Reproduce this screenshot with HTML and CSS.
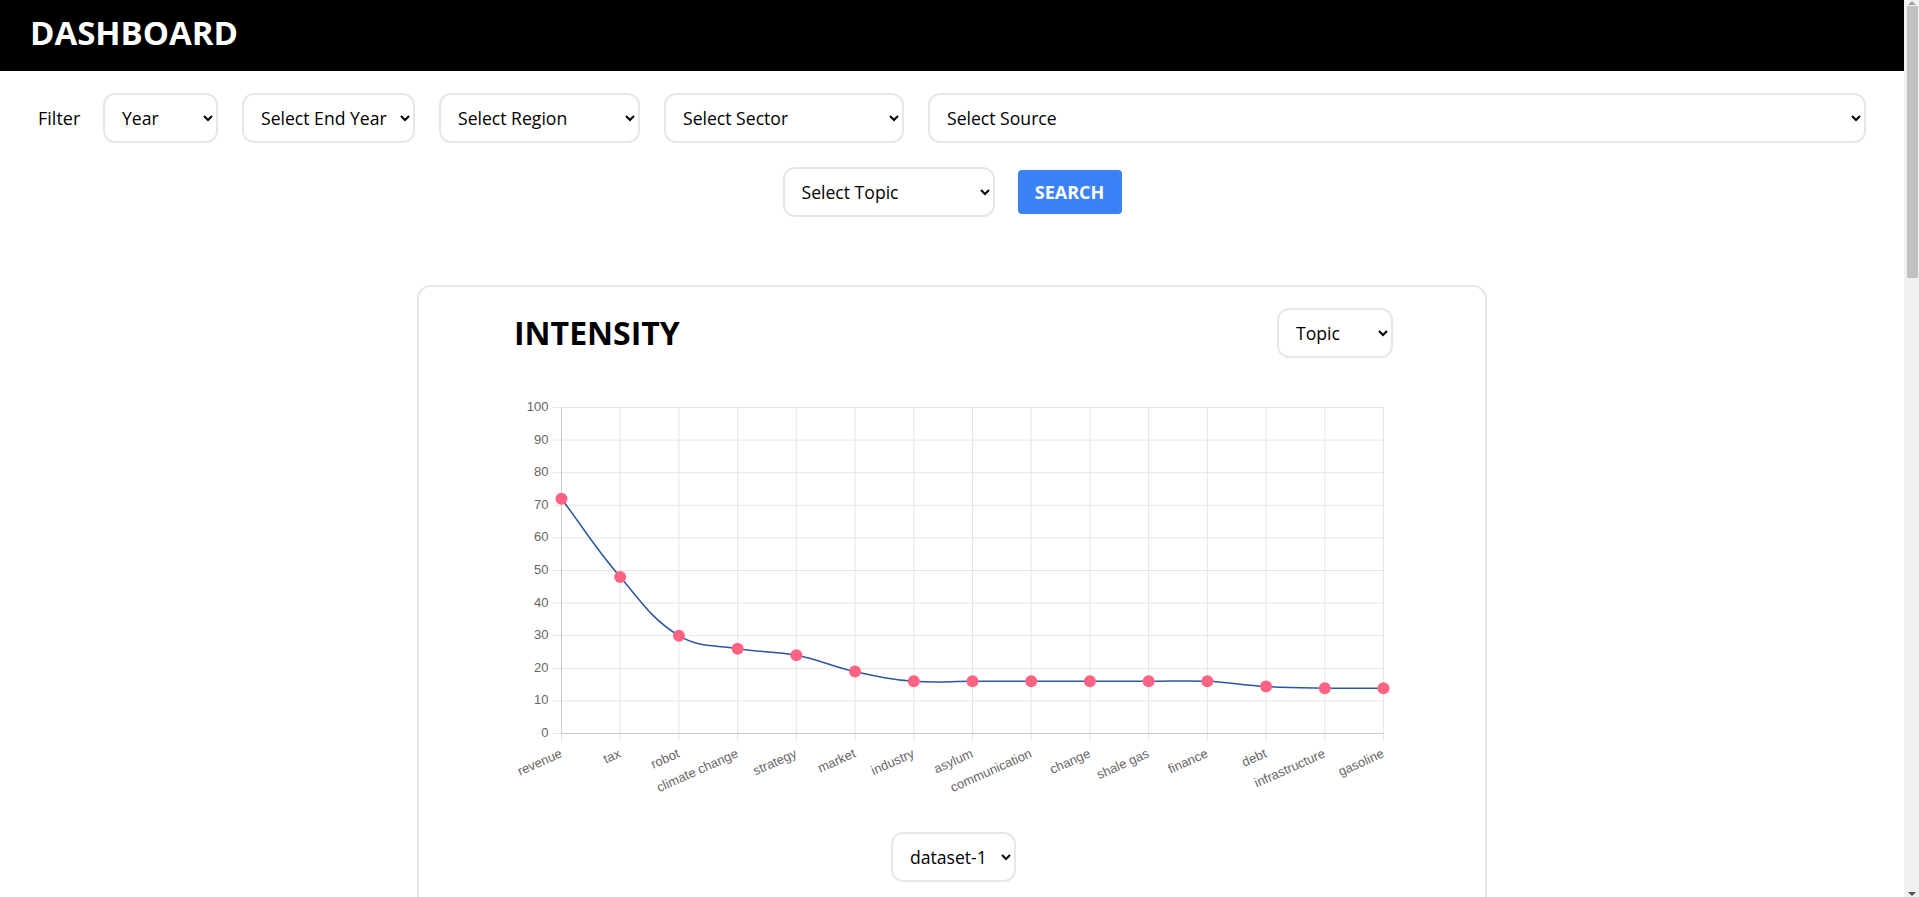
FILE: index.html
```html
<!DOCTYPE html>
<html lang="en">
<head>
<meta charset="utf-8">
<title>Dashboard</title>
<link rel="stylesheet" href="styles.css">
</head>
<body>
<header class="topbar">
  <h1 class="brand">DASHBOARD</h1>
</header>
<main class="page">
  <section class="filters">
    <div class="filter-row">
      <label class="filter-label" for="f-year">Filter</label>
      <select id="f-year" class="field field--year">
        <option>Year</option><option>2016</option><option>2017</option><option>2018</option>
      </select>
      <select class="field field--endyear">
        <option>Select End Year</option><option>2018</option><option>2020</option>
      </select>
      <select class="field field--region">
        <option>Select Region</option><option>Northern America</option><option>Europe</option>
      </select>
      <select class="field field--sector">
        <option>Select Sector</option><option>Energy</option><option>Financial services</option>
      </select>
      <select class="field field--source">
        <option>Select Source</option><option>EIA</option><option>Reuters</option>
      </select>
    </div>
    <div class="filter-row filter-row--center">
      <select class="field field--topic">
        <option>Select Topic</option><option>oil</option><option>gas</option>
      </select>
      <button class="btn-search" type="button">SEARCH</button>
    </div>
  </section>

  <section class="card">
    <div class="card-head">
      <h2 class="card-title">INTENSITY</h2>
      <select class="field field--group">
        <option>Topic</option><option>Sector</option><option>Region</option>
      </select>
    </div>
    <svg id="intensity-chart" class="chart" width="879" height="430" viewBox="0 0 879 430"></svg>
    <div class="card-foot">
      <select class="field field--dataset">
        <option>dataset-1</option><option>dataset-2</option>
      </select>
    </div>
  </section>
</main>
<div class="scrollbar" aria-hidden="true">
  <span class="scrollbar-arrow scrollbar-arrow--up"></span>
  <span class="scrollbar-thumb"></span>
  <span class="scrollbar-arrow scrollbar-arrow--down"></span>
</div>
<script src="chart.js"></script>
</body>
</html>
```

FILE: styles.css
```css
html, body {
  margin: 0;
  padding: 0;
}

body {
  font-family: "Open Sans", "Noto Sans", sans-serif;
  color: #000;
  background: #fff;
  padding-right: 15px;
}

/* classic browser scrollbar drawn over the right edge */
.scrollbar {
  position: fixed;
  top: 0;
  right: 0;
  width: 15px;
  height: 100vh;
  background: #f1f1f1;
  display: flex;
  flex-direction: column;
  align-items: center;
}

.scrollbar-arrow {
  width: 0;
  height: 0;
  border-left: 4px solid transparent;
  border-right: 4px solid transparent;
}

.scrollbar-arrow--up {
  margin-top: 1px;
  border-bottom: 4px solid #a3a3a3;
}

.scrollbar-arrow--down {
  margin-top: auto;
  margin-bottom: 1px;
  border-top: 4px solid #505050;
}

.scrollbar-thumb {
  width: 11px;
  height: 272px;
  margin-top: 1px;
  margin-left: 2px;
  background: #c1c1c1;
}

.topbar {
  background: #000;
  height: 71px;
  box-sizing: border-box;
  padding: 10px 30px 0;
}

.brand {
  margin: 0;
  font-size: 33px;
  line-height: 45px;
  font-weight: 700;
  color: #fff;
  letter-spacing: 0;
}

.page {
  padding: 22px 38px 40px;
}

.filters {
  display: flex;
  flex-direction: column;
  gap: 24px;
}

.filter-row {
  display: flex;
  align-items: center;
  gap: 24px;
}

.filter-row--center {
  justify-content: center;
  gap: 23px;
}

.filter-label {
  flex: none;
  width: 41px;
  white-space: nowrap;
  font-size: 18px;
  line-height: 24px;
}

.field {
  box-sizing: border-box;
  height: 50px;
  border: 2px solid #e5e7eb;
  border-radius: 12px;
  background: #fff;
  color: #000;
  font-family: "Open Sans", "Noto Sans", sans-serif;
  font-size: 17.6px;
  padding: 0 6px 0 13px;
  flex: none;
}

.field--year { width: 115px; }
.field--endyear { width: 173px; }
.field--region { width: 201px; }
.field--sector { width: 240px; }
.field--source { flex: 1 1 auto; min-width: 0; }
.field--topic { width: 212px; }
.field--group { width: 116px; }
.field--dataset { width: 125px; }

.btn-search {
  height: 44px;
  width: 104px;
  border: none;
  border-radius: 4px;
  background: #3b82f6;
  color: #fff;
  font-family: "Open Sans", "Noto Sans", sans-serif;
  font-size: 18px;
  font-weight: 700;
  padding: 0;
}

.card {
  box-sizing: border-box;
  width: 1070px;
  min-height: 2560px;
  margin: 68px auto 0;
  border: 2px solid #e5e7eb;
  border-radius: 14px;
  padding: 21px 92px 40px 95px;
}

.card-head {
  display: flex;
  align-items: center;
  justify-content: space-between;
}

.card-title {
  margin: 0;
  font-size: 32px;
  line-height: 44px;
  font-weight: 700;
}

.chart {
  display: block;
  margin-top: 22px;
  font-family: "Liberation Sans", Arial, sans-serif;
}

.chart .grid { stroke: #e6e6e6; stroke-width: 1; }
.chart .axis { stroke: #c9c9c9; stroke-width: 1; }
.chart .tick-label { fill: #666; font-size: 13px; }
.chart .series { fill: none; stroke: #2a56a6; stroke-width: 1.5; }
.chart .dot { fill: #ff6384; }

.card-foot {
  display: flex;
  justify-content: center;
  margin-top: 22px;
}
```

FILE: chart.js
```js
(function () {
  var labels = ["revenue", "tax", "robot", "climate change", "strategy", "market", "industry",
    "asylum", "communication", "change", "shale gas", "finance", "debt", "infrastructure", "gasoline"];
  var values = [72, 48, 30, 26, 24, 19, 16, 16, 16, 16, 16, 16, 14.4, 13.9, 13.9];

  var NS = "http://www.w3.org/2000/svg";
  var svg = document.getElementById("intensity-chart");
  var L = 47.5, R = 869.5, T = 27.5, B = 353.5;

  function x(i) { return L + i * (R - L) / (labels.length - 1); }
  function y(v) { return B - v * (B - T) / 100; }
  function el(tag, attrs, text) {
    var n = document.createElementNS(NS, tag);
    for (var k in attrs) n.setAttribute(k, attrs[k]);
    if (text !== undefined) n.textContent = text;
    svg.appendChild(n);
    return n;
  }

  for (var v = 0; v <= 100; v += 10) {
    var yy = y(v);
    el("line", { x1: L - 9, x2: v === 0 ? L : R, y1: yy, y2: yy, "class": "grid" });
    el("text", { x: L - 13, y: yy, "text-anchor": "end", "dominant-baseline": "middle", "class": "tick-label" }, String(v));
  }
  for (var i = 0; i < labels.length; i++) {
    el("line", { x1: x(i), x2: x(i), y1: i === 0 ? B : T, y2: B + 8, "class": "grid" });
  }
  el("line", { x1: L, x2: L, y1: T, y2: B, "class": "axis" });
  el("line", { x1: L, x2: R, y1: B, y2: B, "class": "axis" });

  var pts = values.map(function (val, i) { return { x: x(i), y: y(val) }; });
  var t = 0.4;
  var cps = pts.map(function (p, i) {
    var prev = pts[i - 1] || p, next = pts[i + 1] || p;
    var d01 = Math.hypot(p.x - prev.x, p.y - prev.y);
    var d12 = Math.hypot(next.x - p.x, next.y - p.y);
    var s01 = d01 / (d01 + d12) || 0, s12 = d12 / (d01 + d12) || 0;
    var fa = t * s01, fb = t * s12;
    return {
      prev: { x: p.x - fa * (next.x - prev.x), y: p.y - fa * (next.y - prev.y) },
      next: { x: p.x + fb * (next.x - prev.x), y: p.y + fb * (next.y - prev.y) }
    };
  });
  var d = "M" + pts[0].x + " " + pts[0].y;
  for (var j = 1; j < pts.length; j++) {
    var a = cps[j - 1].next, b = cps[j].prev;
    d += " C" + a.x.toFixed(2) + " " + a.y.toFixed(2) + " " + b.x.toFixed(2) + " " + b.y.toFixed(2) +
      " " + pts[j].x.toFixed(2) + " " + pts[j].y.toFixed(2);
  }
  el("path", { d: d, "class": "series" });

  pts.forEach(function (p) { el("circle", { cx: p.x, cy: p.y, r: 6, "class": "dot" }); });

  labels.forEach(function (lab, i) {
    var ax = x(i), ay = B + 20;
    el("text", {
      x: ax, y: ay, "text-anchor": "end", "dominant-baseline": "middle", "class": "tick-label",
      transform: "rotate(-24 " + ax + " " + ay + ")"
    }, lab);
  });
})();
```
